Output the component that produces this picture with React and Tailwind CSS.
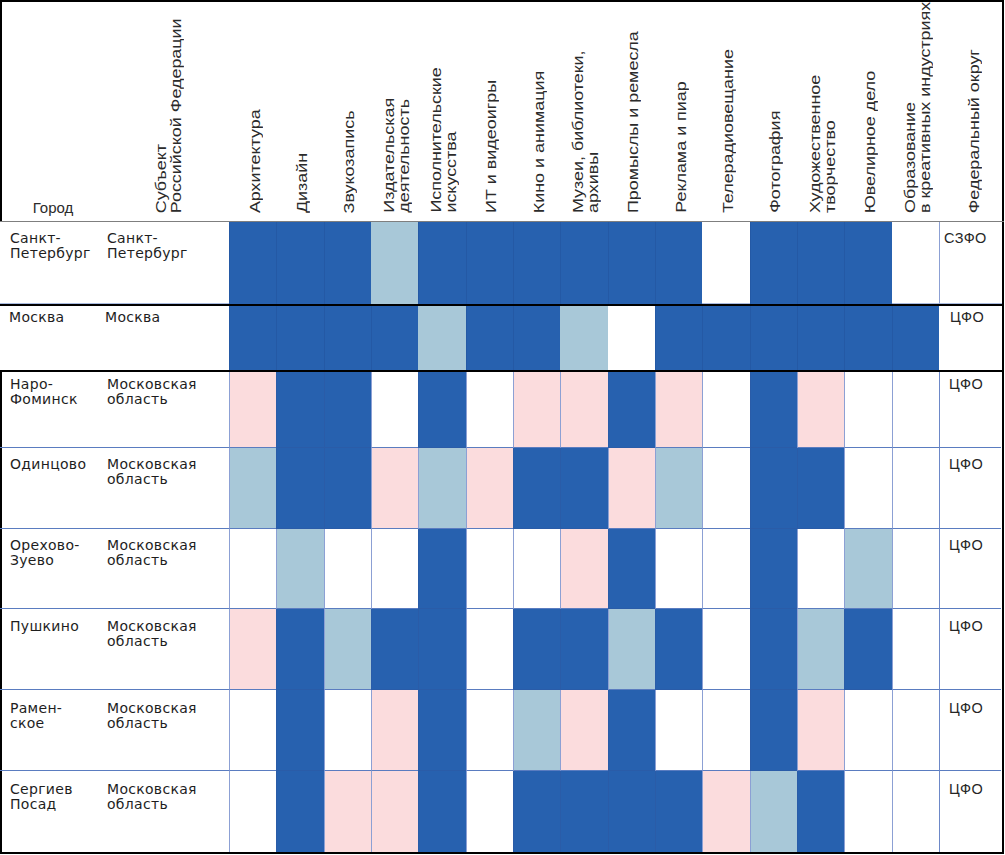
import React from 'react';

const GRID = 'grid grid-cols-[103px_126px_repeat(15,minmax(0,1fr))_65px]';

const HEAD = [
  ['Архитектура'],
  ['Дизайн'],
  ['Звукозапись'],
  ['Издательская', 'деятельность'],
  ['Исполнительские', 'искусства'],
  ['ИТ и видеоигры'],
  ['Кино и анимация'],
  ['Музеи, библиотеки,', 'архивы'],
  ['Промыслы и ремесла'],
  ['Реклама и пиар'],
  ['Телерадиовещание'],
  ['Фотография'],
  ['Художественное', 'творчество'],
  ['Ювелирное дело'],
  ['Образование', 'в креативных индустриях'],
];

const FILL = {
  D: 'bg-[#2761af]',
  L: 'bg-[#a8c8d8]',
  P: 'bg-[#fbdcdd]',
  W: 'bg-white',
};

const LOWER = [
  { city: ['Наро-', 'Фоминск'], cells: 'PDDWDWPPDPWDPWW', h: 'h-[76px]', pt: 'pt-[5px]' },
  { city: ['Одинцово'], cells: 'LDDPLPDDPLWDDWW', h: 'h-[81px]', pt: 'pt-[9px]' },
  { city: ['Орехово-', 'Зуево'], cells: 'WLWWDWWPDWWDWLW', h: 'h-[80px]', pt: 'pt-[9px]' },
  { city: ['Пушкино'], cells: 'PDLDDWDDLDWDLDW', h: 'h-[81px]', pt: 'pt-[10px]' },
  { city: ['Рамен-', 'ское'], cells: 'WDWPDWLPDWWDPWW', h: 'h-[81px]', pt: 'pt-[11px]' },
  { city: ['Сергиев', 'Посад'], cells: 'WDPPDWDDDDPLDWW', h: 'h-[81px]', pt: 'pt-[11px]' },
];

function Lines({ lines }) {
  return lines.map((l, i) => (
    <React.Fragment key={i}>
      {i > 0 && <br />}
      {l}
    </React.Fragment>
  ));
}

function VText({ lines }) {
  return (
    <div className="origin-bottom scale-y-[1.28] ml-[5px]">
      <div className="[writing-mode:vertical-rl] rotate-180 whitespace-nowrap text-[14px] leading-[15px] text-[#2b2b2b] font-['Liberation_Sans',Arial,sans-serif]">
        <Lines lines={lines} />
      </div>
    </div>
  );
}

const cellText = "font-['DejaVu_Sans',Verdana,sans-serif] text-[14px] leading-[15px] tracking-[0.3px] text-[#1e1e1e]";
const fedText = "font-['Liberation_Sans',Arial,sans-serif] text-[14.5px] leading-[15px] tracking-[0.4px] text-[#262626]";

function lowerCellClass(c, last) {
  if (c === 'D') {
    return last
      ? 'bg-[#2761af] border-l border-[#2a5ca8]'
      : 'bg-[#2761af] border-l border-b border-[#2a5ca8]';
  }
  const fill = FILL[c];
  return last
    ? `${fill} border-l border-l-[#8ca0d4]`
    : `${fill} border-l border-b border-l-[#8ca0d4] border-b-[#5a7cc0]`;
}

export default function App() {
  return (
    <div className="w-[1004px] bg-white overflow-hidden">
      {/* Header */}
      <div className={`${GRID} h-[222px] border-b border-[#7f7f7f] overflow-hidden shadow-[inset_2px_2px_0_#000,inset_-2px_0_0_#000]`}>
        <div className="flex items-end justify-center pb-[5px] pl-[3px]">
          <span className="text-[15px] leading-[17px] text-[#2b2b2b] font-['Liberation_Sans',Arial,sans-serif]">Город</span>
        </div>
        <div className="flex items-end justify-center pb-[8px]">
          <VText lines={['Субъект', 'Российской Федерации']} />
        </div>
        {HEAD.map((h, i) => (
          <div key={i} className="flex items-end justify-center pb-[8px]">
            <VText lines={h} />
          </div>
        ))}
        <div className="flex items-end justify-center pb-[8px] border-l border-transparent">
          <VText lines={['Федеральный округ']} />
        </div>
      </div>

      {/* Санкт-Петербург */}
      <div className={`${GRID} h-[82px] shadow-[inset_-2px_0_0_#000]`}>
        <div className={`${cellText} pl-[10px] pt-[9px] border-b border-[#a9bbe0]`}>
          Санкт-<br />Петербург
        </div>
        <div className={`${cellText} pl-[4px] pt-[9px] border-b border-[#a9bbe0]`}>
          Санкт-<br />Петербург
        </div>
        {'DDDLDDDDDDWDDDW'.split('').map((c, i) =>
          c === 'D' ? (
            <div key={i} className="bg-[#2761af] border-l border-[#2459a5]" />
          ) : c === 'W' ? (
            <div key={i} className="bg-white border-b border-[#a9bbe0]" />
          ) : (
            <div key={i} className={`${FILL[c]}`} />
          )
        )}
        <div className={`${fedText} pl-[4px] pt-[9px] border-l border-b border-l-[#8ca0d4] border-b-[#a9bbe0] mr-[2px]`}>
          СЗФО
        </div>
      </div>

      {/* Москва */}
      <div className={`${GRID} h-[68px] py-[2px] shadow-[inset_0_2px_0_#000,inset_0_-2px_0_#000,inset_-2px_0_0_#000]`}>
        <div className={`${cellText} pl-[9px] pt-[4px]`}>Москва</div>
        <div className={`${cellText} pl-[2px] pt-[4px]`}>Москва</div>
        {'DDDDLDDLWDDDDDD'.split('').map((c, i) =>
          c === 'D' ? (
            <div key={i} className="bg-[#2761af] border-l border-[#2459a5]" />
          ) : (
            <div key={i} className={`${FILL[c]}`} />
          )
        )}
        <div className={`${fedText} pl-[11px] pt-[4px]`}>ЦФО</div>
      </div>

      {/* Lower group */}
      <div className="pb-[2px] shadow-[inset_2px_0_0_#000,inset_-2px_0_0_#000,inset_0_-2px_0_#000]">
        {LOWER.map((r, ri) => {
          const last = ri === LOWER.length - 1;
          const bb = last ? '' : 'border-b border-[#5a7cc0]';
          return (
            <div key={ri} className={`${GRID} ${r.h}`}>
              <div className={`${cellText} pl-[10px] ${r.pt} ${bb}`}>
                <Lines lines={r.city} />
              </div>
              <div className={`${cellText} pl-[4px] ${r.pt} ${bb}`}>
                Московская<br />область
              </div>
              {r.cells.split('').map((c, i) => (
                <div key={i} className={lowerCellClass(c, last)} />
              ))}
              <div
                className={`${fedText} pl-[9px] ${r.pt} border-l border-l-[#6d88c8] mr-[3px] ${last ? '' : 'border-b border-b-[#5a7cc0]'}`}
              >
                ЦФО
              </div>
            </div>
          );
        })}
      </div>
    </div>
  );
}
